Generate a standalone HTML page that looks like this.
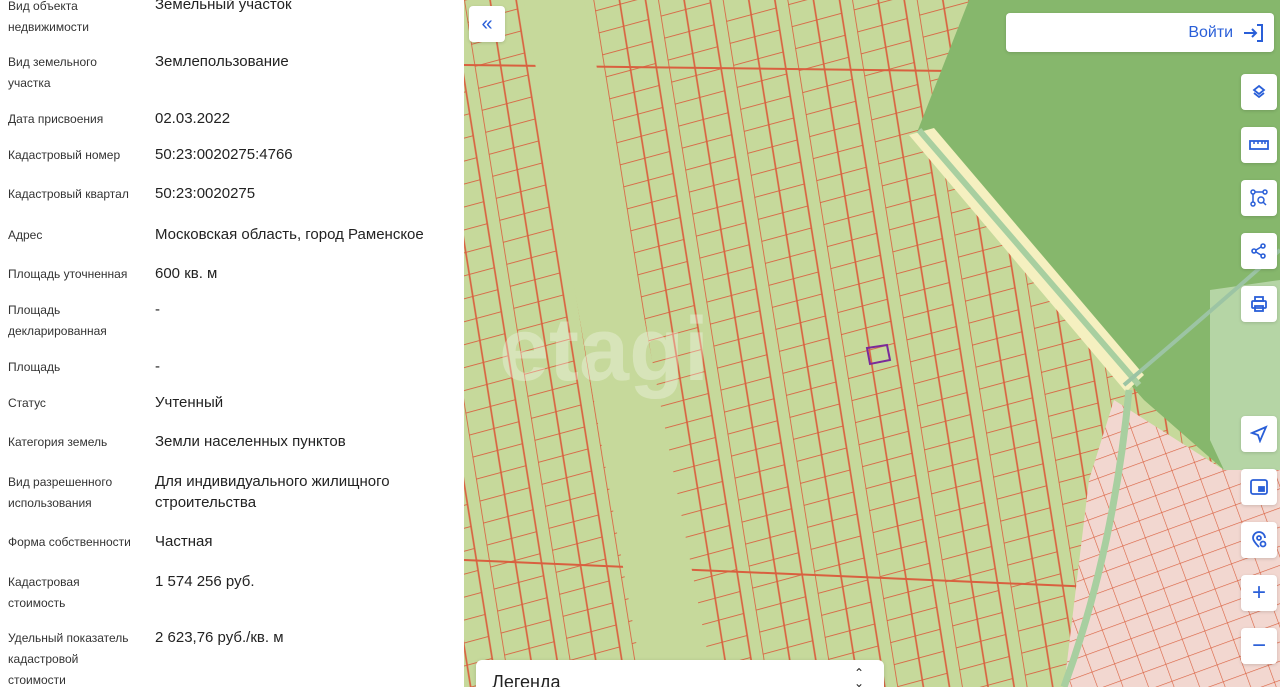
<!DOCTYPE html>
<html><head><meta charset="utf-8"><style>
*{margin:0;padding:0;box-sizing:border-box}
body{width:1280px;height:687px;overflow:hidden;position:relative;font-family:"Liberation Sans","DejaVu Sans",sans-serif;background:#fff}
#left{position:absolute;left:0;top:0;width:464px;height:687px;background:#fff}
.l{position:absolute;left:8px;font-size:12px;line-height:21px;color:#333;width:140px}
.v{position:absolute;left:155px;font-size:15px;line-height:21px;color:#222;width:300px}
#map{position:absolute;left:464px;top:0;width:816px;height:687px;overflow:hidden;background:#c6d99b}
.btn{position:absolute;background:#fff;border-radius:4px;box-shadow:0 1px 3px rgba(0,0,0,.15);display:flex;align-items:center;justify-content:center}
</style></head><body>
<div id="left">
<div class="l" style="top:-4px">Вид объекта<br>недвижимости</div><div class="v" style="top:-6px">Земельный участок</div>
<div class="l" style="top:52px">Вид земельного<br>участка</div><div class="v" style="top:51px">Землепользование</div>
<div class="l" style="top:109px">Дата присвоения</div><div class="v" style="top:108px">02.03.2022</div>
<div class="l" style="top:145px">Кадастровый номер</div><div class="v" style="top:144px">50:23:0020275:4766</div>
<div class="l" style="top:184px">Кадастровый квартал</div><div class="v" style="top:183px">50:23:0020275</div>
<div class="l" style="top:225px">Адрес</div><div class="v" style="top:224px">Московская область, город Раменское</div>
<div class="l" style="top:264px">Площадь уточненная</div><div class="v" style="top:263px">600 кв. м</div>
<div class="l" style="top:300px">Площадь<br>декларированная</div><div class="v" style="top:299px">-</div>
<div class="l" style="top:357px">Площадь</div><div class="v" style="top:356px">-</div>
<div class="l" style="top:393px">Статус</div><div class="v" style="top:392px">Учтенный</div>
<div class="l" style="top:432px">Категория земель</div><div class="v" style="top:431px">Земли населенных пунктов</div>
<div class="l" style="top:472px">Вид разрешенного<br>использования</div><div class="v" style="top:471px">Для индивидуального жилищного<br>строительства</div>
<div class="l" style="top:532px">Форма собственности</div><div class="v" style="top:531px">Частная</div>
<div class="l" style="top:572px">Кадастровая<br>стоимость</div><div class="v" style="top:571px">1 574 256 руб.</div>
<div class="l" style="top:628px">Удельный показатель<br>кадастровой<br>стоимости</div><div class="v" style="top:627px">2 623,76 руб./кв. м</div>
</div>
<div id="map">
<svg width="816" height="687" style="position:absolute;left:0;top:0">
<defs>
<pattern id="g" width="62" height="22" patternUnits="userSpaceOnUse" patternTransform="matrix(1 -0.27 0.16 1 0 0)">
<path d="M0 0V22M25 0V22M50 0V22M0 0H50" stroke="#d9603f" stroke-width="1.6" fill="none"/>
</pattern>
<pattern id="gs" width="24" height="18" patternUnits="userSpaceOnUse" patternTransform="rotate(-20)">
<path d="M0 0V18M0 0H24" stroke="#d9603f" stroke-width="1.2" fill="none"/>
</pattern>
</defs>
<rect width="816" height="687" fill="url(#g)"/>
<path d="M0 65 L816 75" stroke="#d9603f" stroke-width="2"/>
<path d="M0 560 L700 590" stroke="#d9603f" stroke-width="2"/>
<polygon points="60,0 120,0 250,687 180,687" fill="#c6d99b"/>
<polygon points="505,0 816,0 816,470 760,470 680,400 450,140" fill="#86b76c"/>
<polygon points="746,290 816,280 816,470 760,470 746,440" fill="#b5d5a5"/>
<polygon points="445,135 470,128 680,375 662,392" fill="#f5f0c0"/>
<polygon points="650,400 760,470 816,470 816,687 600,687 625,480" fill="#f2d7d0"/>
<polygon points="650,400 760,470 816,470 816,687 600,687 625,480" fill="url(#gs)"/>
<path d="M455 130 L675 385" stroke="#a8cfa0" stroke-width="6" fill="none"/>
<path d="M665 390 Q650 550 600 687" stroke="#a8cfa0" stroke-width="7" fill="none"/>
<path d="M660 385 Q760 300 816 250" stroke="#9cc4a4" stroke-width="4" fill="none"/>
<polygon points="403,348 423,345 426,360 406,364" fill="none" stroke="#7a2a9a" stroke-width="2"/>
<text x="35" y="380" font-size="90" font-weight="bold" fill="#fff" opacity=".3" font-family="Liberation Sans">etagi</text>
</svg>
<div class="btn" style="left:5px;top:6px;width:36px;height:36px;color:#2a5fd8;font-size:20px">«</div>
<div class="btn" style="left:542px;top:13px;width:268px;height:39px;justify-content:flex-end;padding-right:10px;color:#2a5fd8;font-size:16px">Войти&nbsp;&nbsp;<svg width="22" height="20" viewBox="0 0 22 20"><path d="M2 10H14M10 6l4 4-4 4M15 2h5v16h-5" stroke="#2a5fd8" stroke-width="2" fill="none"/></svg></div>
<div class="btn" style="left:777px;top:74px;width:36px;height:36px"><svg width="18" height="18" viewBox="0 0 18 18"><path d="M9 3l5 4-5 4-5-4z M4 10l5 4 5-4" stroke="#2a5fd8" stroke-width="1.8" fill="none"/></svg></div>
<div class="btn" style="left:777px;top:127px;width:36px;height:36px"><svg width="20" height="12" viewBox="0 0 20 12"><rect x="1" y="2" width="18" height="8" stroke="#2a5fd8" stroke-width="1.8" fill="none"/><path d="M5 2v3M9 2v3M13 2v3M16 2v3" stroke="#2a5fd8" stroke-width="1.5"/></svg></div>
<div class="btn" style="left:777px;top:180px;width:36px;height:36px"><svg width="18" height="18" viewBox="0 0 18 18" stroke="#2a5fd8" stroke-width="1.5" fill="none"><circle cx="3" cy="3" r="2"/><circle cx="15" cy="3" r="2"/><circle cx="3" cy="15" r="2"/><circle cx="11" cy="11" r="3"/><path d="M5 3h8M3 5v8M13 13l3 3"/></svg></div>
<div class="btn" style="left:777px;top:233px;width:36px;height:36px"><svg width="18" height="18" viewBox="0 0 18 18" stroke="#2a5fd8" stroke-width="1.6" fill="none"><circle cx="13" cy="4" r="2"/><circle cx="4" cy="9" r="2"/><circle cx="13" cy="14" r="2"/><path d="M6 8l5-3M6 10l5 3"/></svg></div>
<div class="btn" style="left:777px;top:286px;width:36px;height:36px"><svg width="18" height="18" viewBox="0 0 18 18" stroke="#2a5fd8" stroke-width="1.8" fill="none"><rect x="5" y="2" width="8" height="4"/><rect x="2" y="6" width="14" height="7" rx="1"/><rect x="5" y="11" width="8" height="5"/></svg></div>
<div class="btn" style="left:777px;top:416px;width:36px;height:36px"><svg width="18" height="18" viewBox="0 0 18 18"><path d="M2 8L16 2 10 16 8 10z" stroke="#2a5fd8" stroke-width="1.8" fill="none"/></svg></div>
<div class="btn" style="left:777px;top:469px;width:36px;height:36px"><svg width="18" height="16" viewBox="0 0 18 16" stroke="#2a5fd8" stroke-width="1.8" fill="none"><rect x="1" y="1" width="16" height="14" rx="2"/><rect x="9" y="8" width="5" height="4" fill="#2a5fd8"/></svg></div>
<div class="btn" style="left:777px;top:522px;width:36px;height:36px"><svg width="18" height="18" viewBox="0 0 18 18" stroke="#2a5fd8" stroke-width="1.8" fill="none"><path d="M9 16S3 10 3 7a6 6 0 0 1 12 0"/><circle cx="9" cy="7" r="2"/><circle cx="13" cy="13" r="2.5"/></svg></div>
<div class="btn" style="left:777px;top:575px;width:36px;height:36px;color:#2a5fd8;font-size:24px">+</div>
<div class="btn" style="left:777px;top:628px;width:36px;height:36px;color:#2a5fd8;font-size:24px">−</div>
<div style="position:absolute;left:12px;top:660px;width:408px;height:40px;background:#fff;border-radius:6px;box-shadow:0 1px 4px rgba(0,0,0,.15);padding:12px 16px;font-size:18px;color:#222">Легенда<span style="position:absolute;right:20px;top:8px;font-size:12px;line-height:10px">⌃<br>⌄</span></div>
</div>
</body></html>
